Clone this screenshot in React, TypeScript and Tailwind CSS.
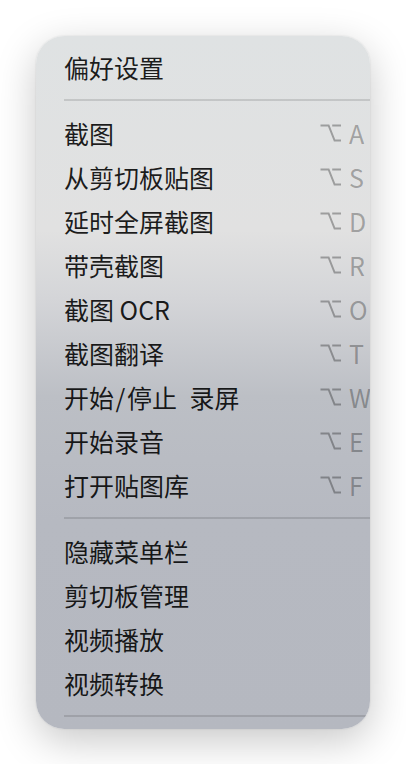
import React from "react"

type Item = { label: string; key?: string }

const groups: Item[][] = [
  [{ label: "偏好设置" }],
  [
    { label: "截图", key: "A" },
    { label: "从剪切板贴图", key: "S" },
    { label: "延时全屏截图", key: "D" },
    { label: "带壳截图", key: "R" },
    { label: "截图 OCR", key: "O" },
    { label: "截图翻译", key: "T" },
    { label: "开始\u200A/\u200A停止\u2002录屏", key: "W" },
    { label: "开始录音", key: "E" },
    { label: "打开贴图库", key: "F" },
  ],
  [
    { label: "隐藏菜单栏" },
    { label: "剪切板管理" },
    { label: "视频播放" },
    { label: "视频转换" },
  ],
]

function OptionKey() {
  return (
    <svg width="21" height="18" viewBox="0 0 21 18" fill="none" stroke="currentColor" strokeWidth="2">
      <path d="M0.5 1.5 H8.6 L14.6 16.5 H21" />
      <path d="M12.2 1.5 H21" />
    </svg>
  )
}

function Separator() {
  return (
    <div className="h-[22px] flex items-center pl-[28px]">
      <div className="w-[400px] shrink-0 h-[1.5px] bg-black/[0.12]" />
    </div>
  )
}

export default function App() {
  return (
    <div className="min-h-screen bg-white pt-[36px] pl-[36px]" style={{ fontFamily: '"Noto Sans CJK SC", "Liberation Sans", sans-serif' }}>
      <div className="w-[334px] rounded-[28px] overflow-hidden pt-[9px] pb-[2px] shadow-[0_12px_40px_rgba(0,0,0,0.22),0_0_2px_rgba(0,0,0,0.12)] bg-[linear-gradient(180deg,#dfe2e3_0%,#e1e1e1_28%,#d4d5d8_38%,#bcbfc5_52%,#b6b9c1_70%,#b5b8c0_100%)]">
        {groups.map((group, gi) => (
          <div key={gi}>
            {group.map((item) => (
              <div key={item.label} className="h-[44px] flex items-center pl-[28px]">
                <span className="w-[256px] shrink-0 text-[25px] leading-none text-black/[0.88] whitespace-pre">
                  {item.label}
                </span>
                {item.key && (
                  <span className="flex items-center gap-[8px] shrink-0 text-black/[0.3] text-[25px] leading-none">
                    <OptionKey />
                    <span>{item.key}</span>
                  </span>
                )}
              </div>
            ))}
            <Separator />
          </div>
        ))}
      </div>
    </div>
  )
}
